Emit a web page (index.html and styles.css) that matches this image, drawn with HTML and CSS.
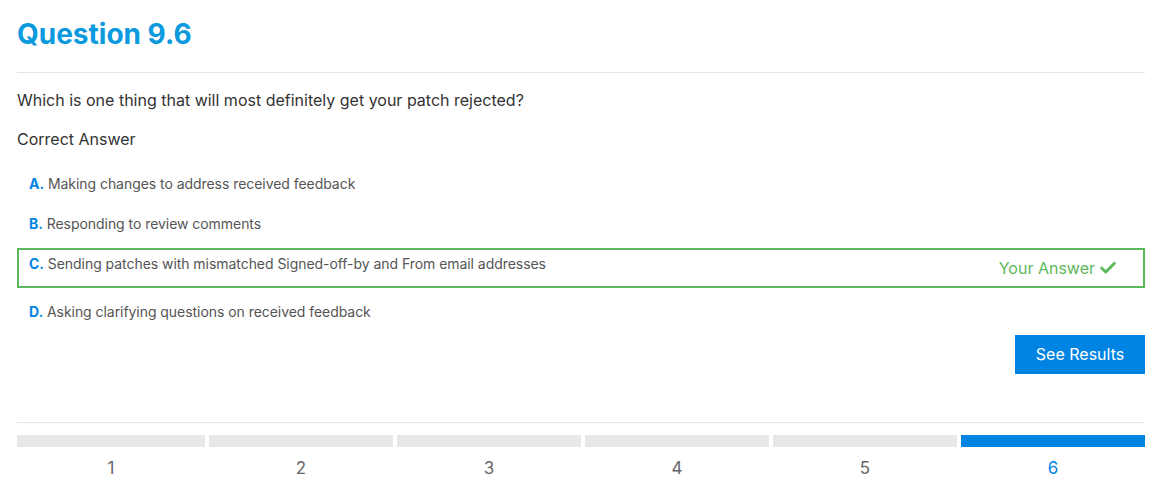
FILE: index.html
```html
<!DOCTYPE html>
<html>
<head>
<meta charset="utf-8">
<link rel="stylesheet" href="styles.css">
</head>
<body>
<div class="page">
  <h1 class="title">Question 9.6</h1>
  <hr class="rule">
  <p class="question">Which is one thing that will most definitely get your patch rejected?</p>
  <p class="label">Correct Answer</p>
  <ul class="options">
    <li class="option"><span class="opt-text"><b class="letter">A.</b> Making changes to address received feedback</span></li>
    <li class="option"><span class="opt-text"><b class="letter">B.</b> Responding to review comments</span></li>
    <li class="option selected"><span class="opt-text"><b class="letter">C.</b> Sending patches with mismatched Signed-off-by and From email addresses</span>
      <span class="your-answer">Your Answer
        <svg class="check" width="16" height="14" viewBox="0 0 16 14"><path d="M1.8 7.2 L5.8 11 L14.2 2.6" fill="none" stroke="#5cb85c" stroke-width="2.8" stroke-linecap="square"/></svg>
      </span>
    </li>
    <li class="option"><span class="opt-text"><b class="letter">D.</b> Asking clarifying questions on received feedback</span></li>
  </ul>
  <div class="actions"><button class="btn">See Results</button></div>
  <hr class="rule rule-bottom">
  <div class="steps">
    <div class="step"><div class="bar"></div><div class="num">1</div></div>
    <div class="step"><div class="bar"></div><div class="num">2</div></div>
    <div class="step"><div class="bar"></div><div class="num">3</div></div>
    <div class="step"><div class="bar"></div><div class="num">4</div></div>
    <div class="step"><div class="bar"></div><div class="num">5</div></div>
    <div class="step active"><div class="bar"></div><div class="num">6</div></div>
  </div>
</div>
</body>
</html>
```

FILE: styles.css
```css
* { box-sizing: border-box; }
html, body { margin: 0; padding: 0; background: #fff; }
body { font-family: Inter, "Noto Sans", sans-serif; color: #333; }
.page { padding: 17px 16px 0 17px; width: 1161px; }
.title { margin: 0; font-size: 28px; line-height: 34px; font-weight: 700; color: #0b9ade; }
.rule { border: 0; border-top: 1px solid #e5e5e5; margin: 21px 0 0; height: 0; }
.question { margin: 15px 0 0; font-size: 16px; line-height: 24px; color: #333; }
.label { margin: 15px 0 0; font-size: 16px; line-height: 24px; color: #333; }
.options { list-style: none; margin: 13px 0 0; padding: 0; }
.option { display: flex; align-items: flex-start; justify-content: space-between; border: 2px solid transparent; padding: 8px 27px 8px 10px; font-size: 14px; line-height: 20px; color: #555; letter-spacing: -0.05px; }
.option.selected { border-color: #5cb85c; margin: 4px 0; padding-top: 4px; padding-bottom: 6px; }
.letter { color: #0084e3; font-weight: 700; }
.your-answer { display: flex; align-items: center; gap: 5px; margin-top: 2px; font-size: 16px; line-height: 24px; color: #5cb85c; letter-spacing: 0; }
.check { display: block; }
.actions { display: flex; justify-content: flex-end; margin-top: 3px; }
.btn { width: 130px; height: 39px; border: 0; border-radius: 0; background: #0084e3; color: #fff; font-family: inherit; font-size: 16px; line-height: 20px; padding: 0 0 1px; }
.rule-bottom { margin-top: 48px; }
.steps { display: grid; grid-template-columns: repeat(6, 1fr); margin-top: 12px; }
.step { padding-left: 4px; }
.step:first-child { padding-left: 0; }
.bar { height: 12px; background: #e8e8e8; }
.active .bar { background: #0084e3; }
.num { margin-top: 9px; text-align: center; font-size: 17px; line-height: 24px; color: #666; }
.active .num { color: #0084e3; }
```
